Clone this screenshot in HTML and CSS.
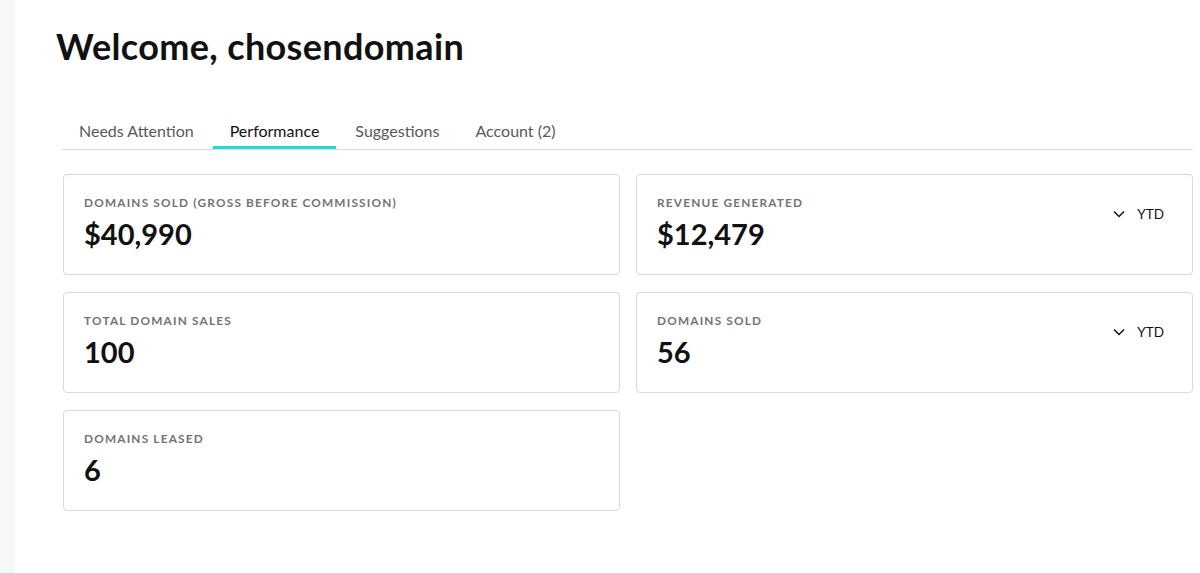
FILE: index.html
```html
<!DOCTYPE html>
<html>
<head>
<meta charset="utf-8">
<link rel="stylesheet" href="styles.css">
</head>
<body>
<div class="page">
  <aside class="sidebar"></aside>
  <main class="main">
    <h1 class="title">Welcome, chosendomain</h1>
    <nav class="tabs">
      <div class="tab">Needs Attention</div>
      <div class="tab active">Performance</div>
      <div class="tab">Suggestions</div>
      <div class="tab">Account (2)</div>
    </nav>
    <section class="grid">
      <div class="card">
        <div class="card-text">
          <div class="label">Domains Sold (Gross Before Commission)</div>
          <div class="value">$40,990</div>
        </div>
      </div>
      <div class="card">
        <div class="card-text">
          <div class="label">Revenue Generated</div>
          <div class="value">$12,479</div>
        </div>
        <div class="period">
          <svg class="chev" width="12" height="8" viewBox="0 0 12 8"><path d="M1 1.5 L6 6.5 L11 1.5" fill="none" stroke="#111" stroke-width="1.5"/></svg>
          <span>YTD</span>
        </div>
      </div>
      <div class="card">
        <div class="card-text">
          <div class="label">Total Domain Sales</div>
          <div class="value">100</div>
        </div>
      </div>
      <div class="card">
        <div class="card-text">
          <div class="label">Domains Sold</div>
          <div class="value">56</div>
        </div>
        <div class="period">
          <svg class="chev" width="12" height="8" viewBox="0 0 12 8"><path d="M1 1.5 L6 6.5 L11 1.5" fill="none" stroke="#111" stroke-width="1.5"/></svg>
          <span>YTD</span>
        </div>
      </div>
      <div class="card">
        <div class="card-text">
          <div class="label">Domains Leased</div>
          <div class="value">6</div>
        </div>
      </div>
    </section>
  </main>
</div>
</body>
</html>
```

FILE: styles.css
```css
* { box-sizing: border-box; }
html, body { margin: 0; padding: 0; background: #fff; }
body { font-family: Lato, "Liberation Sans", sans-serif; color: #111; }
.page { display: flex; min-height: 573px; }
.sidebar { width: 15px; background: #f5f7f8; flex: none; }
.main { flex: 1; padding: 0 7px 0 48px; }
.title {
  margin: 25px 0 0 -7px;
  font-size: 36px;
  line-height: 42px;
  font-weight: 700;
  letter-spacing: 0.35px;
  color: #111;
}
.tabs {
  display: flex;
  margin-top: 52px;
  border-bottom: 1px solid #d6dbe0;
  margin-left: -1px;
}
.tab {
  padding: 2px 17px 5px 17px;
  font-size: 16px;
  line-height: 20px;
  color: #595959;
  border-bottom: 3px solid transparent;
  margin-right: 2px;
}
.tab.active { color: #111; border-bottom-color: #1bdbdb; }
.grid {
  margin-top: 24px;
  display: grid;
  grid-template-columns: 1fr 1fr;
  column-gap: 16px;
  row-gap: 17px;
}
.card {
  height: 101px;
  border: 1px solid #d6dbe0;
  border-radius: 4px;
  padding: 20px 28px 0 20px;
  display: flex;
  justify-content: space-between;
  align-items: flex-start;
}
.label {
  font-size: 11.8px;
  line-height: 16px;
  font-weight: 700;
  letter-spacing: 1.2px;
  text-transform: uppercase;
  color: #737373;
}
.value {
  margin-top: 5px;
  font-size: 29px;
  line-height: 36px;
  font-weight: 700;
  color: #111;
}
.period {
  display: flex;
  align-items: center;
  gap: 12px;
  margin-top: 10px;
  font-size: 13.5px;
  line-height: 18px;
  color: #111;
}
.chev { display: block; }
```
